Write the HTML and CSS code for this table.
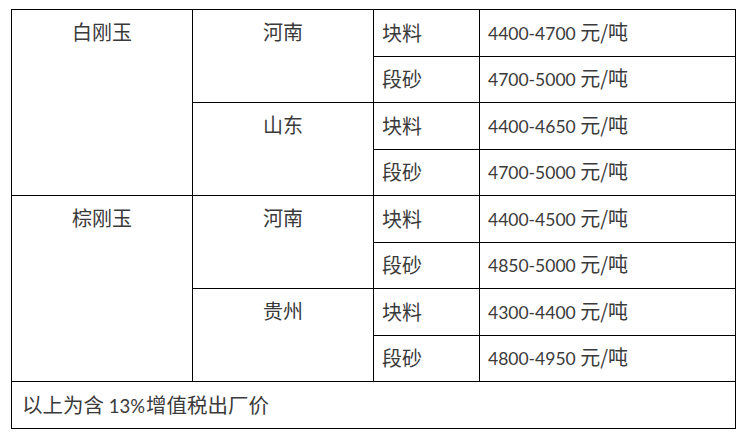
FILE: index.html
```html
<!DOCTYPE html>
<html lang="zh">
<head>
<meta charset="utf-8">
<title>刚玉价格</title>
<link rel="stylesheet" href="styles.css">
</head>
<body>
<table class="price">
  <colgroup>
    <col class="c1"><col class="c2"><col class="c3"><col class="c4">
  </colgroup>
  <tbody>
    <tr>
      <td class="cat" rowspan="4">白刚玉</td>
      <td class="prov" rowspan="2">河南</td>
      <td class="kind">块料</td>
      <td class="val"><span class="num">4400-4700 </span>元/吨</td>
    </tr>
    <tr>
      <td class="kind">段砂</td>
      <td class="val"><span class="num">4700-5000 </span>元/吨</td>
    </tr>
    <tr>
      <td class="prov" rowspan="2">山东</td>
      <td class="kind">块料</td>
      <td class="val"><span class="num">4400-4650 </span>元/吨</td>
    </tr>
    <tr>
      <td class="kind">段砂</td>
      <td class="val"><span class="num">4700-5000 </span>元/吨</td>
    </tr>
    <tr>
      <td class="cat" rowspan="4">棕刚玉</td>
      <td class="prov" rowspan="2">河南</td>
      <td class="kind">块料</td>
      <td class="val"><span class="num">4400-4500 </span>元/吨</td>
    </tr>
    <tr>
      <td class="kind">段砂</td>
      <td class="val"><span class="num">4850-5000 </span>元/吨</td>
    </tr>
    <tr>
      <td class="prov" rowspan="2">贵州</td>
      <td class="kind">块料</td>
      <td class="val"><span class="num">4300-4400 </span>元/吨</td>
    </tr>
    <tr>
      <td class="kind">段砂</td>
      <td class="val"><span class="num">4800-4950 </span>元/吨</td>
    </tr>
    <tr>
      <td class="note" colspan="4">以上为含<span class="num note-num"> 13%</span>增值税出厂价</td>
    </tr>
  </tbody>
</table>
</body>
</html>
```

FILE: styles.css
```css
html, body {
  margin: 0;
  padding: 0;
  background: #ffffff;
}

body {
  font-family: "Noto Sans CJK SC", "Noto Sans", sans-serif;
  font-size: 20px;
  color: #3a3a3a;
}

.price {
  margin: 9px 0 0 11px;
  width: 724px;
  table-layout: fixed;
  border-collapse: collapse;
}

.c1 { width: 181px; }
.c2 { width: 181px; }
.c3 { width: 106px; }
.c4 { width: 256px; }

.price tr {
  height: 46.5px;
}

.price td {
  border: 1px solid #000000;
  padding: 0 8px;
  line-height: 26px;
  vertical-align: middle;
  white-space: nowrap;
}

.price td.cat,
.price td.prov {
  text-align: center;
  vertical-align: top;
  padding-top: 9px;
}

.price td.note {
  padding-left: 10px;
  font-size: 20.5px;
}

.num {
  font-family: Lato, "Liberation Sans", sans-serif;
  font-size: 17.5px;
}

.note-num {
  font-size: 18.5px;
  margin-right: 1px;
}
```
